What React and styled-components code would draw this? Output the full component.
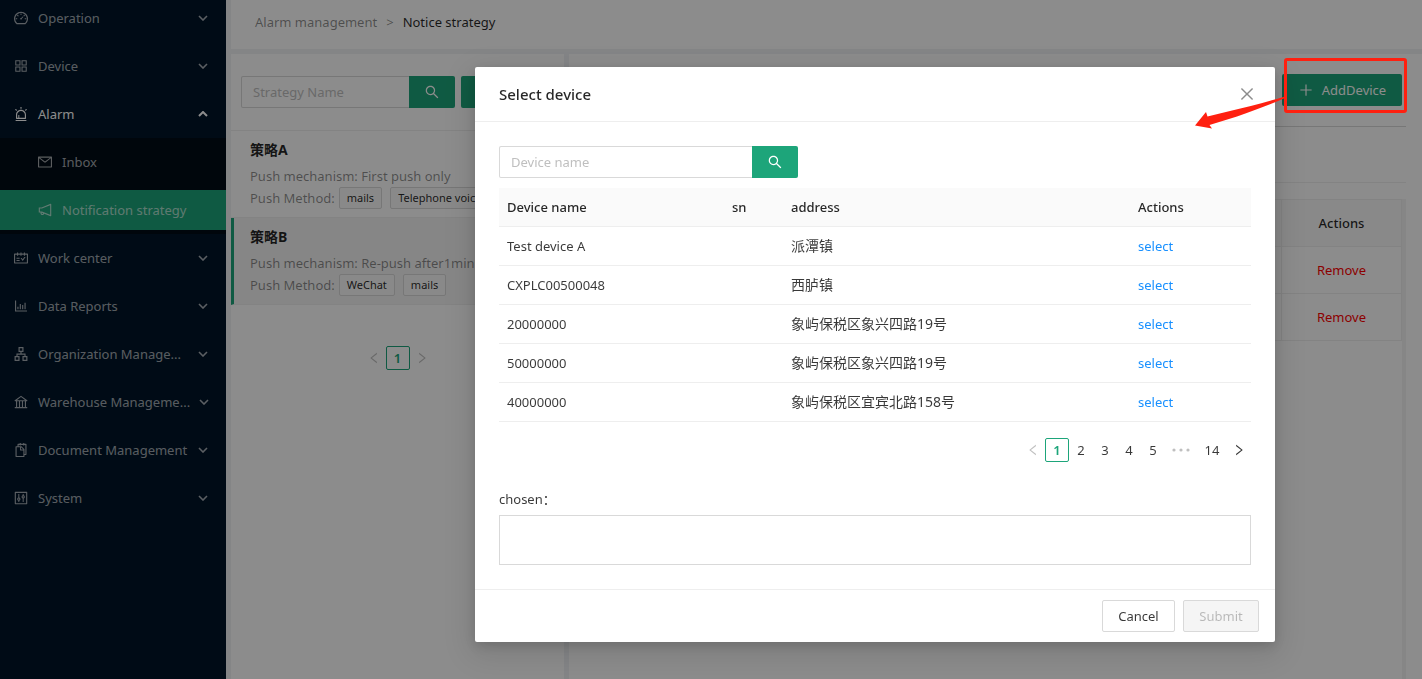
import React from 'react';
import styled, { createGlobalStyle, css } from 'styled-components';
import {
  AiOutlineDashboard,
  AiOutlineAppstore,
  AiOutlineAlert,
  AiOutlineMail,
  AiOutlineNotification,
  AiOutlineSchedule,
  AiOutlineBarChart,
  AiOutlineApartment,
  AiOutlineBank,
  AiOutlineSnippets,
  AiOutlineControl,
  AiOutlineSearch,
  AiOutlinePlus,
  AiOutlineClose,
  AiOutlineLeft,
  AiOutlineRight,
} from 'react-icons/ai';

const green = '#1da57a';
const text = 'rgba(0, 0, 0, 0.78)';
const strong = 'rgba(0, 0, 0, 0.85)';
const muted = 'rgba(0, 0, 0, 0.45)';
const line = '#eeeeee';
const control = '#d9d9d9';

const GlobalStyle = createGlobalStyle`
  *, *::before, *::after { box-sizing: border-box; }
  html, body, #root { height: 100%; }
  body {
    margin: 0;
    overflow: hidden;
    background: #f0f2f5;
    color: ${text};
    font: 13px/22px "Noto Sans", "Noto Sans CJK SC", sans-serif;
  }
  button, input, textarea { font: inherit; color: inherit; }
  button { cursor: pointer; }
  ul { list-style: none; margin: 0; padding: 0; }
  h2, h3, p { margin: 0; }
  a { text-decoration: none; }
  svg { display: block; flex: none; }
`;

const Page = styled.div`
  display: flex;
  min-height: 100%;
`;

/* Sidebar */

const Sidebar = styled.nav`
  flex: none;
  width: 226px;
  background: #001529;
`;

const MenuList = styled.ul`
  margin-top: -6px;
`;

const SubList = styled.ul`
  background: #000c17;
`;

const MenuRow = styled.li`
  padding: 4px 0;
`;

const MenuLink = styled.a`
  display: flex;
  align-items: center;
  gap: 9px;
  height: 40px;
  padding: 0 18px 0 ${(p) => (p.$nested ? 37 : 13)}px;
  white-space: nowrap;
  color: ${(p) => (p.$bright ? '#fff' : 'rgba(255, 255, 255, 0.65)')};
  background: ${(p) => (p.$selected ? green : 'transparent')};
`;

const Caret = styled.svg`
  width: 10px;
  height: 6px;
  margin-left: auto;
  fill: none;
  stroke: currentColor;
  stroke-width: ${(p) => (p.$up ? 2 : 1.6)};
  transform: ${(p) => (p.$up ? 'rotate(180deg)' : 'none')};
`;

/* Content */

const Content = styled.div`
  flex: 1;
  min-width: 0;
  display: flex;
  flex-direction: column;
  gap: 5px;
  padding-left: 5px;
`;

const Breadcrumb = styled.header`
  display: flex;
  gap: 9px;
  height: 49px;
  padding: 11px 24px;
  background: #fff;
  color: ${muted};
`;

const Crumb = styled.span`
  color: ${(p) => (p.$current ? strong : 'inherit')};
`;

const Columns = styled.div`
  flex: 1;
  display: flex;
  gap: 5px;
`;

const StrategyPanel = styled.section`
  flex: none;
  width: 333px;
  overflow: hidden;
  background: #fff;
`;

const PanelToolbar = styled.div`
  display: flex;
  gap: 6px;
  padding: 22px 10px;
  border-bottom: 1px solid ${line};
`;

const SearchBox = styled.form`
  display: flex;
  width: ${(p) => p.$width}px;
`;

const SearchInput = styled.input`
  flex: 1;
  min-width: 0;
  height: 32px;
  padding: 0 11px;
  border: 1px solid ${control};
  border-right: 0;
  border-radius: 2px 0 0 2px;
  background: #fff;
  outline: none;
  &::placeholder { color: #bfbfbf; opacity: 1; }
`;

const PrimaryButton = styled.button`
  display: flex;
  align-items: center;
  justify-content: center;
  gap: 8px;
  height: 32px;
  padding: 0;
  width: ${(p) => p.$width}px;
  border: 0;
  border-radius: ${(p) => (p.$attached ? '0 2px 2px 0' : '2px')};
  background: ${green};
  color: #fff;
`;

const StrategyItem = styled.li`
  padding: 8px 16px 8px 19px;
  border-bottom: 1px solid ${line};
  white-space: nowrap;
  color: ${muted};
  ${(p) =>
    p.$active &&
    css`
      padding-left: 16px;
      border-left: 3px solid ${green};
      background: #f5f5f5;
    `}
`;

const StrategyName = styled.h3`
  margin-bottom: 4px;
  font-size: 14px;
  line-height: 22px;
  font-weight: 700;
  color: ${strong};
`;

const Methods = styled.div`
  display: flex;
  align-items: center;
  gap: 8px;
`;

const MethodLabel = styled.span`
  margin-right: -4px;
`;

const Tag = styled.span`
  height: 22px;
  padding: 0 7px;
  border: 1px solid ${control};
  border-radius: 2px;
  background: #fafafa;
  font-size: 11px;
  line-height: 20px;
  color: ${strong};
`;

/* Pagination */

const Pager = styled.nav`
  display: flex;
  justify-content: ${(p) => p.$align};
  padding-top: ${(p) => p.$top}px;
`;

const PageButton = styled.button`
  display: flex;
  align-items: center;
  justify-content: center;
  width: ${(p) => (p.$wide ? 30 : 24)}px;
  height: 24px;
  padding: 0;
  border: 1px solid ${(p) => (p.$current ? green : 'transparent')};
  border-radius: 2px;
  background: ${(p) => (p.$current ? '#fff' : 'transparent')};
  color: ${(p) => (p.$current ? green : p.$dim ? 'rgba(0, 0, 0, 0.25)' : text)};
  font-weight: ${(p) => (p.$current ? 600 : 400)};
`;

const Dots = styled.svg`
  width: 32px;
  height: 24px;
  fill: rgba(0, 0, 0, 0.25);
`;

/* Device panel */

const DevicePanel = styled.section`
  flex: 1;
  min-width: 0;
  display: flex;
  flex-direction: column;
  padding: 20px 16px 0;
  background: #fff;
`;

const DeviceToolbar = styled.div`
  display: flex;
  justify-content: flex-end;
  padding: 0 4px 20px;
  border-bottom: 1px solid ${control};
`;

const DeviceFilters = styled.div`
  height: 56px;
  margin-bottom: 16px;
  border-bottom: 1px solid ${line};
`;

const TableScroll = styled.div`
  flex: 1;
  border-right: 4px solid #f5f5f5;
`;

const BoundTable = styled.table`
  width: 100%;
  border-collapse: collapse;
  th, td {
    height: 47px;
    padding: 0 16px;
    border: 1px solid ${line};
    text-align: center;
  }
  th { background: #fafafa; color: ${strong}; font-weight: 500; }
`;

const ActionColumn = styled.th`
  width: 120px;
`;

const TextButton = styled.button`
  padding: 0;
  border: 0;
  background: none;
  color: ${(p) => (p.$danger ? '#ff0000' : '#1890ff')};
`;

/* Dialog */

const Mask = styled.div`
  position: fixed;
  inset: 0;
  display: flex;
  justify-content: flex-end;
  align-items: flex-start;
  padding: 67px 147px 0 0;
  background: rgba(0, 0, 0, 0.45);
`;

const Dialog = styled.section`
  width: 800px;
  border-radius: 2px;
  background: #fff;
  box-shadow: 0 4px 12px rgba(0, 0, 0, 0.15), 0 9px 32px 8px rgba(0, 0, 0, 0.1);
`;

const DialogHeader = styled.header`
  display: flex;
  align-items: center;
  justify-content: space-between;
  height: 55px;
  padding: 0 19px 0 24px;
  border-bottom: 1px solid ${line};
`;

const DialogTitle = styled.h2`
  font-size: 15px;
  line-height: 22px;
  font-weight: 500;
  color: ${strong};
`;

const CloseButton = styled.button`
  padding: 0;
  border: 0;
  background: none;
  color: ${muted};
`;

const DialogBody = styled.div`
  padding: 24px;
`;

const PickTable = styled.table`
  width: 100%;
  margin-top: 10px;
  border-collapse: separate;
  border-spacing: 0;
  table-layout: fixed;
  th, td {
    height: 39px;
    padding: 0 8px;
    border-bottom: 1px solid ${line};
    text-align: left;
    white-space: nowrap;
  }
  th { background: #fafafa; color: ${strong}; font-weight: 500; }
`;

const Col = styled.col`
  width: ${(p) => (p.$width ? `${p.$width}px` : 'auto')};
`;

const AddressCell = styled.td`
  font-size: 14px;
`;

const ChosenLabel = styled.label`
  display: block;
  margin-top: 26px;
`;

const ChosenBox = styled.textarea`
  display: block;
  width: 100%;
  height: 50px;
  margin-top: 5px;
  border: 1px solid ${control};
  background: #fff;
  resize: none;
  outline: none;
`;

const DialogFooter = styled.footer`
  display: flex;
  justify-content: flex-end;
  gap: 8px;
  padding: 10px 16px;
  border-top: 1px solid ${line};
`;

const PlainButton = styled.button`
  height: 32px;
  width: ${(p) => p.$width}px;
  padding: 0;
  border: 1px solid ${control};
  border-radius: 2px;
  background: #fff;
  &:disabled {
    background: #f5f5f5;
    color: rgba(0, 0, 0, 0.25);
  }
`;

/* Callout over the page */

const Highlight = styled.div`
  position: fixed;
  top: 58px;
  right: 15px;
  width: 123px;
  height: 55px;
  border: 3px solid #ff2010;
  border-radius: 3px;
`;

const Pointer = styled.svg`
  position: fixed;
  top: 94px;
  right: 136px;
  width: 92px;
  height: 36px;
  fill: #ff2010;
`;

const menu = [
  { label: 'Operation', Icon: AiOutlineDashboard },
  { label: 'Device', Icon: AiOutlineAppstore },
  {
    label: 'Alarm',
    Icon: AiOutlineAlert,
    children: [
      { label: 'Inbox', Icon: AiOutlineMail },
      { label: 'Notification strategy', Icon: AiOutlineNotification, selected: true },
    ],
  },
  { label: 'Work center', Icon: AiOutlineSchedule },
  { label: 'Data Reports', Icon: AiOutlineBarChart },
  { label: 'Organization Manage...', Icon: AiOutlineApartment },
  { label: 'Warehouse Manageme...', Icon: AiOutlineBank },
  { label: 'Document Management', Icon: AiOutlineSnippets },
  { label: 'System', Icon: AiOutlineControl },
];

const strategies = [
  { name: '策略A', mechanism: 'First push only', methods: ['mails', 'Telephone voice'] },
  { name: '策略B', mechanism: 'Re-push after1min', methods: ['WeChat', 'mails'], active: true },
];

const devices = [
  { name: 'Test device A', address: '派潭镇' },
  { name: 'CXPLC00500048', address: '西胪镇' },
  { name: '20000000', address: '象屿保税区象兴四路19号' },
  { name: '50000000', address: '象屿保税区象兴四路19号' },
  { name: '40000000', address: '象屿保税区宜宾北路158号' },
];

function MenuEntry({ item, nested }) {
  const { label, Icon, children, selected } = item;
  return (
    <MenuRow>
      <MenuLink href="#" $nested={nested} $bright={Boolean(children)} $selected={selected}>
        <Icon size={16} />
        {label}
        {!nested && (
          <Caret viewBox="0 0 10 6" $up={Boolean(children)}>
            <path d="M1 1l4 4 4-4" />
          </Caret>
        )}
      </MenuLink>
    </MenuRow>
  );
}

function Search({ width, label }) {
  return (
    <SearchBox $width={width} onSubmit={(e) => e.preventDefault()}>
      <SearchInput placeholder={label} aria-label={label} />
      <PrimaryButton $width={46} $attached aria-label="Search">
        <AiOutlineSearch size={16} />
      </PrimaryButton>
    </SearchBox>
  );
}

export default function App() {
  return (
    <>
      <GlobalStyle />
      <Page>
        <Sidebar>
          <MenuList>
            {menu.map((item) => (
              <React.Fragment key={item.label}>
                <MenuEntry item={item} />
                {item.children && (
                  <li>
                    <SubList>
                      {item.children.map((child) => (
                        <MenuEntry key={child.label} item={child} nested />
                      ))}
                    </SubList>
                  </li>
                )}
              </React.Fragment>
            ))}
          </MenuList>
        </Sidebar>

        <Content>
          <Breadcrumb>
            <Crumb>Alarm management</Crumb>
            <Crumb>&gt;</Crumb>
            <Crumb $current>Notice strategy</Crumb>
          </Breadcrumb>

          <Columns>
            <StrategyPanel>
              <PanelToolbar>
                <Search width={214} label="Strategy Name" />
                <PrimaryButton $width={94} aria-label="Add">
                  <AiOutlinePlus size={16} />
                </PrimaryButton>
              </PanelToolbar>
              <ul>
                {strategies.map((s) => (
                  <StrategyItem key={s.name} $active={s.active}>
                    <StrategyName>{s.name}</StrategyName>
                    <p>Push mechanism: {s.mechanism}</p>
                    <Methods>
                      <MethodLabel>Push Method:</MethodLabel>
                      {s.methods.map((m) => (
                        <Tag key={m}>{m}</Tag>
                      ))}
                    </Methods>
                  </StrategyItem>
                ))}
              </ul>
              <Pager $align="center" $top={41} aria-label="Strategy pages">
                <PageButton $dim aria-label="Previous"><AiOutlineLeft size={14} /></PageButton>
                <PageButton $current>1</PageButton>
                <PageButton $dim aria-label="Next"><AiOutlineRight size={14} /></PageButton>
              </Pager>
            </StrategyPanel>

            <DevicePanel>
              <DeviceToolbar>
                <PrimaryButton $width={120}>
                  <AiOutlinePlus size={16} />
                  AddDevice
                </PrimaryButton>
              </DeviceToolbar>
              <DeviceFilters />
              <TableScroll>
                <BoundTable>
                  <thead>
                    <tr>
                      <th />
                      <ActionColumn>Actions</ActionColumn>
                    </tr>
                  </thead>
                  <tbody>
                    {[1, 2].map((row) => (
                      <tr key={row}>
                        <td />
                        <td><TextButton $danger>Remove</TextButton></td>
                      </tr>
                    ))}
                  </tbody>
                </BoundTable>
              </TableScroll>
            </DevicePanel>
          </Columns>
        </Content>
      </Page>

      <Mask>
        <Dialog role="dialog" aria-labelledby="dialog-title">
          <DialogHeader>
            <DialogTitle id="dialog-title">Select device</DialogTitle>
            <CloseButton aria-label="Close"><AiOutlineClose size={18} /></CloseButton>
          </DialogHeader>
          <DialogBody>
            <Search width={299} label="Device name" />
            <PickTable>
              <colgroup>
                <Col $width={225} />
                <Col $width={59} />
                <Col />
                <Col $width={121} />
              </colgroup>
              <thead>
                <tr>
                  <th>Device name</th>
                  <th>sn</th>
                  <th>address</th>
                  <th>Actions</th>
                </tr>
              </thead>
              <tbody>
                {devices.map((d) => (
                  <tr key={d.name}>
                    <td>{d.name}</td>
                    <td />
                    <AddressCell>{d.address}</AddressCell>
                    <td><TextButton>select</TextButton></td>
                  </tr>
                ))}
              </tbody>
            </PickTable>
            <Pager $align="flex-end" $top={16} aria-label="Device pages">
              <PageButton $dim aria-label="Previous"><AiOutlineLeft size={14} /></PageButton>
              {[1, 2, 3, 4, 5].map((n) => (
                <PageButton key={n} $current={n === 1}>{n}</PageButton>
              ))}
              <Dots viewBox="0 0 32 24">
                <circle cx="9" cy="12" r="1.6" />
                <circle cx="16" cy="12" r="1.6" />
                <circle cx="23" cy="12" r="1.6" />
              </Dots>
              <PageButton $wide>14</PageButton>
              <PageButton aria-label="Next"><AiOutlineRight size={14} /></PageButton>
            </Pager>
            <ChosenLabel htmlFor="chosen">chosen：</ChosenLabel>
            <ChosenBox id="chosen" readOnly />
          </DialogBody>
          <DialogFooter>
            <PlainButton $width={73}>Cancel</PlainButton>
            <PlainButton $width={76} disabled>Submit</PlainButton>
          </DialogFooter>
        </Dialog>
      </Mask>

      <Highlight />
      <Pointer viewBox="0 0 92 36">
        <path d="M91 2.5C72 8 54 13 36 17L13.500 22.500 12 18 1 31.500 18 34.500 15.500 31 43 22.500C60 16.500 75 11 91 4z" />
      </Pointer>
    </>
  );
}
